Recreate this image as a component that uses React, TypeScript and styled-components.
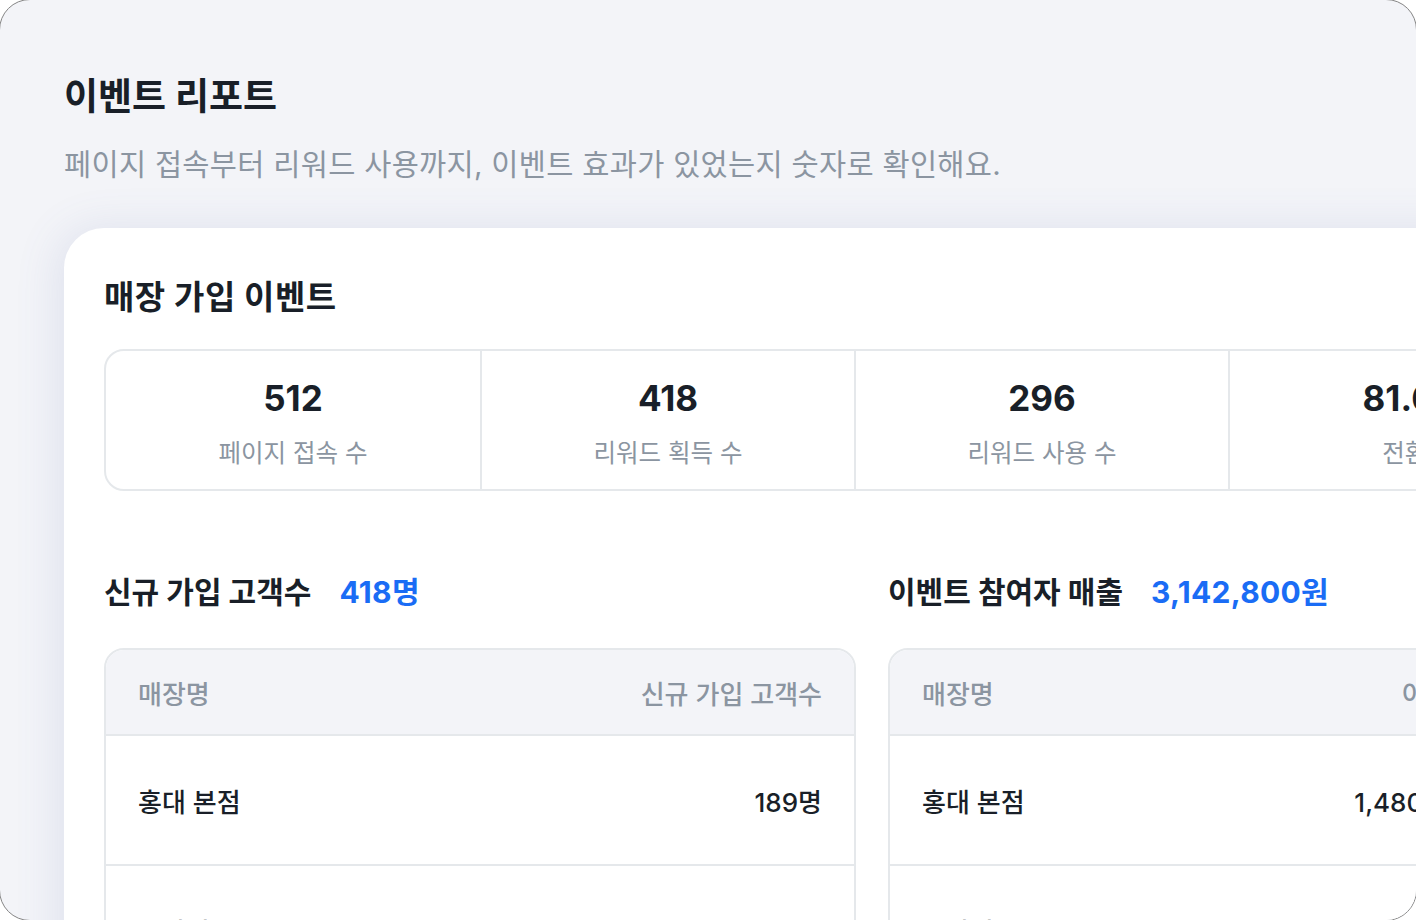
import React from "react";
import styled, { createGlobalStyle } from "styled-components";

const GlobalStyle = createGlobalStyle`
  html, body {
    margin: 0;
    padding: 0;
    background: #ffffff;
    overflow: hidden;
  }
  body {
    font-family: Inter, "Noto Sans CJK KR", "Noto Sans", sans-serif;
    color: #191f28;
    -webkit-font-smoothing: antialiased;
  }
  * { box-sizing: border-box; }
`;

const Frame = styled.div`
  width: 1418px;
  height: 922px;
  margin: -1px;
  border: 1px solid #858585;
  border-radius: 31px;
  background: #f3f4f8;
  overflow: hidden;
`;

const Header = styled.header`
  padding: 73px 64px 0;
`;

const Title = styled.h1`
  margin: 0;
  font-size: 37px;
  line-height: 47px;
  font-weight: 700;
  color: #191f28;
`;

const Subtitle = styled.p`
  margin: 24px 0 0;
  font-size: 29.5px;
  line-height: 40px;
  font-weight: 400;
  letter-spacing: 0.3px;
  color: #8b95a1;
`;

const Card = styled.section`
  margin: 44px 0 0 64px;
  width: 1580px;
  min-height: 900px;
  padding: 48px 40px 40px;
  background: #ffffff;
  border-radius: 40px 40px 0 0;
  box-shadow: -6px 0 44px rgba(90, 110, 170, 0.13);
`;

const CardTitle = styled.h2`
  margin: 0;
  font-size: 33px;
  line-height: 42px;
  font-weight: 700;
  letter-spacing: 0.5px;
  color: #191f28;
`;

const StatsBox = styled.div`
  margin-top: 31px;
  width: 1500px;
  display: grid;
  grid-template-columns: repeat(4, 1fr);
  border: 2px solid #e5e8eb;
  border-radius: 20px;
`;

const StatCell = styled.div<{ $first?: boolean }>`
  display: flex;
  flex-direction: column;
  align-items: center;
  gap: 18px;
  padding: 25px 0 21px;
  border-left: ${(p) => (p.$first ? "none" : "2px solid #e5e8eb")};
`;

const StatValue = styled.div`
  font-size: 35px;
  line-height: 44px;
  font-weight: 700;
  color: #191f28;
`;

const StatLabel = styled.div`
  font-size: 24.5px;
  line-height: 30px;
  font-weight: 400;
  color: #8b95a1;
`;

const Columns = styled.div`
  margin-top: 81px;
  display: grid;
  grid-template-columns: 752px 650px;
  column-gap: 32px;
  align-items: start;
`;

const Column = styled.div`
  display: flex;
  flex-direction: column;
  gap: 36px;
`;

const SectionHeading = styled.div`
  display: flex;
  align-items: baseline;
  gap: 28px;
`;

const SectionTitle = styled.h3`
  margin: 0;
  font-size: 30px;
  line-height: 40px;
  font-weight: 700;
  color: #191f28;
`;

const SectionValue = styled.span`
  font-size: 30px;
  line-height: 40px;
  font-weight: 700;
  letter-spacing: 0.3px;
  color: #1a6cf5;
`;

const Table = styled.div`
  border: 2px solid #e5e8eb;
  border-radius: 20px 20px 0 0;
  overflow: hidden;
`;

const HeadRow = styled.div`
  height: 86px;
  display: flex;
  align-items: center;
  justify-content: space-between;
  padding: 0 32px;
  background: #f3f4f8;
  border-bottom: 2px solid #e5e8eb;
`;

const HeadCell = styled.span`
  font-size: 26px;
  font-weight: 500;
  color: #8b95a1;
`;

const BodyRow = styled.div`
  height: 130px;
  display: flex;
  align-items: center;
  justify-content: space-between;
  padding: 0 32px;
  border-bottom: 2px solid #e5e8eb;
`;

const BodyCell = styled.span`
  font-size: 26px;
  font-weight: 500;
  color: #191f28;
`;

const stats = [
  { value: "512", label: "페이지 접속 수" },
  { value: "418", label: "리워드 획득 수" },
  { value: "296", label: "리워드 사용 수" },
  { value: "81.6%", label: "전환율" },
];

const signupRows = [
  { name: "홍대 본점", value: "189명" },
  { name: "강남점", value: "132명" },
  { name: "성수점", value: "97명" },
];

const salesRows = [
  { name: "홍대 본점", value: "1,480,000원" },
  { name: "강남점", value: "1,012,400원" },
  { name: "성수점", value: "650,400원" },
];

type Row = { name: string; value: string };

const DataTable = ({ valueHeader, rows }: { valueHeader: string; rows: Row[] }) => (
  <Table>
    <HeadRow>
      <HeadCell>매장명</HeadCell>
      <HeadCell>{valueHeader}</HeadCell>
    </HeadRow>
    {rows.map((r) => (
      <BodyRow key={r.name}>
        <BodyCell>{r.name}</BodyCell>
        <BodyCell>{r.value}</BodyCell>
      </BodyRow>
    ))}
  </Table>
);

export default function App() {
  return (
    <>
      <GlobalStyle />
      <Frame>
        <Header>
          <Title>이벤트 리포트</Title>
          <Subtitle>페이지 접속부터 리워드 사용까지, 이벤트 효과가 있었는지 숫자로 확인해요.</Subtitle>
        </Header>
        <Card>
          <CardTitle>매장 가입 이벤트</CardTitle>
          <StatsBox>
            {stats.map((s, i) => (
              <StatCell key={s.label} $first={i === 0}>
                <StatValue>{s.value}</StatValue>
                <StatLabel>{s.label}</StatLabel>
              </StatCell>
            ))}
          </StatsBox>
          <Columns>
            <Column>
              <SectionHeading>
                <SectionTitle>신규 가입 고객수</SectionTitle>
                <SectionValue>418명</SectionValue>
              </SectionHeading>
              <DataTable valueHeader="신규 가입 고객수" rows={signupRows} />
            </Column>
            <Column>
              <SectionHeading>
                <SectionTitle>이벤트 참여자 매출</SectionTitle>
                <SectionValue>3,142,800원</SectionValue>
              </SectionHeading>
              <DataTable valueHeader="이용 금액" rows={salesRows} />
            </Column>
          </Columns>
        </Card>
      </Frame>
    </>
  );
}
